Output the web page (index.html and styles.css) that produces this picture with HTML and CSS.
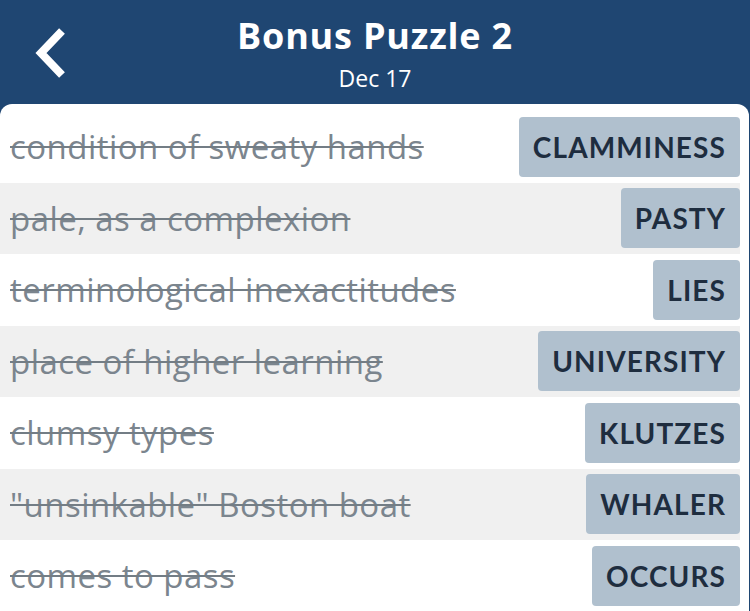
FILE: index.html
```html
<!DOCTYPE html>
<html lang="en">
  <head>
    <meta charset="UTF-8" />
    <meta name="viewport" content="width=device-width, initial-scale=1.0" />
    <link rel="stylesheet" href="styles.css">
  </head>
  <body>
    <header class="header">
      <button type="button" class="back">
        <svg xmlns="http://www.w3.org/2000/svg" viewBox="0 0 32 50">
          <polyline points="28,3 7,25 28,47" fill="none" stroke="white" stroke-width="8" />
        </svg>
      </button>
      <h1 class="title">Bonus Puzzle 2</h1>
      <div class="date">Dec 17</div>
    </header>
    <main class="card">
      <ul class="clues">
        <li class="clue"><span class="text">condition of sweaty hands</span><span class="answer">CLAMMINESS</span></li>
        <li class="clue"><span class="text">pale, as a complexion</span><span class="answer">PASTY</span></li>
        <li class="clue"><span class="text">terminological inexactitudes</span><span class="answer">LIES</span></li>
        <li class="clue"><span class="text">place of higher learning</span><span class="answer">UNIVERSITY</span></li>
        <li class="clue"><span class="text">clumsy types</span><span class="answer">KLUTZES</span></li>
        <li class="clue"><span class="text">"unsinkable" Boston boat</span><span class="answer">WHALER</span></li>
        <li class="clue"><span class="text">comes to pass</span><span class="answer">OCCURS</span></li>
      </ul>
    </main>
  </body>
</html>
```

FILE: styles.css
```css
html,
body {
  width: 100%;
  height: 100%;
}

body {
  margin: 0;
  background-color: #1f4672;
  font-family: "Open Sans", "Noto Sans", sans-serif;
  overflow: hidden;
}

/* Header */

.header {
  position: relative;
  height: 104px;
  display: flex;
  flex-direction: column;
  align-items: center;
  color: white;
}

.header .back {
  position: absolute;
  top: 28px;
  left: 34px;
  width: 32px;
  height: 50px;
  padding: 0;
  border: none;
  background-color: transparent;
  cursor: pointer;
}

.header .back svg {
  width: 100%;
  height: 100%;
  display: block;
}

.header .title {
  margin: 13px 0 0;
  font-size: 36px;
  line-height: 46px;
  font-weight: 700;
  letter-spacing: 0.8px;
}

.header .date {
  margin-top: 5px;
  font-size: 23px;
  line-height: 28px;
}

/* Clue list */

.card {
  height: 507px;
  background-color: white;
  border-radius: 12px 12px 0 0;
  margin-right: 1px;
  padding-top: 7px;
}

.clues {
  list-style: none;
  margin: 0;
  padding: 0;
}

.clue {
  height: 71.5px;
  margin-right: 9px;
  display: flex;
  align-items: center;
  justify-content: space-between;
  padding-left: 10px;
}

.clue:nth-child(even) {
  background-color: #f0f0f0;
}

.clue .text {
  font-size: 33px;
  letter-spacing: 0.45px;
  color: #7b858e;
  text-decoration: line-through;
  text-decoration-color: #737d85;
  text-decoration-thickness: 2px;
  white-space: nowrap;
}

.clue .answer {
  height: 60px;
  display: flex;
  align-items: center;
  padding: 0 14px;
  background-color: #b0c0ce;
  border-radius: 4px;
  color: #1e2d3f;
  font-family: "Lato", "Noto Sans", sans-serif;
  font-size: 28px;
  font-weight: 700;
  letter-spacing: 1.1px;
}
```
